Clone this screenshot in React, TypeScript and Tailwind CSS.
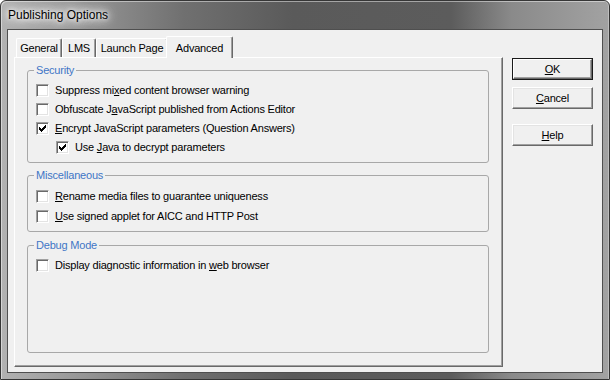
import React from "react";

const FONT = "font-['Liberation_Sans',Arial,sans-serif]";

function Check({ checked }: { checked?: boolean }) {
  return (
    <div className="relative w-[13px] h-[13px] shrink-0 bg-white border border-t-[#a0a0a0] border-l-[#a0a0a0] border-b-white border-r-white shadow-[inset_1px_1px_0_#696969,inset_-1px_-1px_0_#e3e3e3]">
      {checked && (
        <svg className="absolute left-[1px] top-[1px]" width="9" height="9" viewBox="0 0 9 9" shapeRendering="crispEdges">
          <g fill="#000">
            <rect x="7" y="1" width="1" height="1" />
            <rect x="6" y="2" width="2" height="1" />
            <rect x="1" y="3" width="1" height="1" />
            <rect x="5" y="3" width="3" height="1" />
            <rect x="1" y="4" width="2" height="1" />
            <rect x="4" y="4" width="3" height="1" />
            <rect x="1" y="5" width="5" height="1" />
            <rect x="2" y="6" width="3" height="1" />
            <rect x="3" y="7" width="1" height="1" />
          </g>
        </svg>
      )}
    </div>
  );
}

function Row({ checked, children, indent, tall }: { checked?: boolean; children: React.ReactNode; indent?: boolean; tall?: boolean }) {
  return (
    <div className={`flex items-center ${tall ? "h-[20px]" : "h-[19px]"} ${indent ? "pl-[20px]" : ""}`}>
      <Check checked={checked} />
      <span className="ml-[6px] whitespace-nowrap">{children}</span>
    </div>
  );
}

function U({ children }: { children: React.ReactNode }) {
  return <span className="underline underline-offset-[1px]">{children}</span>;
}

function Group({ label, children, className }: { label: string; children: React.ReactNode; className?: string }) {
  return (
    <fieldset className={`border border-[#a8a8a8] rounded-[3px] p-0 m-0 min-w-0 ${className ?? ""}`}>
      <legend className="ml-[6px] px-[2px] leading-[13px] text-[#3f76c6]">{label}</legend>
      {children}
    </fieldset>
  );
}

function Tab({ label, w }: { label: string; w: string }) {
  return (
    <div
      className={`${w} h-[19px] flex items-center justify-center bg-[#f0f0f0] border-t border-l border-r border-t-white border-l-white border-r-[#696969] rounded-t-[2px] shadow-[inset_-1px_0_0_#a0a0a0] pt-[1px]`}
    >
      {label}
    </div>
  );
}

function Btn({ children, def, className }: { children: React.ReactNode; def?: boolean; className?: string }) {
  if (def) {
    return (
      <div className={`w-[81px] h-[22px] border border-[#1a1a1a] ${className ?? ""}`}>
        <div className="w-full h-full flex items-center justify-center border border-t-white border-l-white border-b-[#696969] border-r-[#696969] shadow-[inset_-1px_-1px_0_#a0a0a0] bg-[#f0f0f0]">
          {children}
        </div>
      </div>
    );
  }
  return (
    <div
      className={`w-[81px] h-[22px] flex items-center justify-center border border-t-white border-l-white border-b-[#696969] border-r-[#696969] shadow-[inset_-1px_-1px_0_#a0a0a0,inset_1px_1px_0_#e3e3e3] bg-[#f0f0f0] ${className ?? ""}`}
    >
      {children}
    </div>
  );
}

export default function App() {
  return (
    <div className={`w-[610px] h-[380px] bg-white ${FONT}`}>
      <div className="w-[610px] h-[380px] flex flex-col rounded-t-[6px] border border-[#363636] bg-[linear-gradient(90deg,#b2b2b2_0%,#959595_14%,#707070_30%,#5a5a5a_48%,#5c5c5c_74%,#8a8a8a_84%,#a2a2a2_100%)] shadow-[inset_1px_1px_0_rgba(255,255,255,0.45),inset_-1px_0_0_rgba(255,255,255,0.3)]">
        {/* title */}
        <div className="h-[28px] pl-[7px] flex items-center">
          <span className="text-[12px] text-black leading-none pb-[1px] [text-shadow:0_0_4px_#fff,0_0_8px_#fff,0_0_12px_#fff,0_0_16px_#eee]">
            Publishing Options
          </span>
        </div>
        {/* client */}
        <div className="mx-[6px] h-[344px] border border-[#4f4f4f] bg-[#f0f0f0] text-[11px] text-black tracking-[-0.2px] flex pl-[6px] pt-[6px]">
          <div className="flex flex-col w-[489px]">
            <div className="h-[21px] flex items-end pl-[2px]">
              <Tab label="General" w="w-[46px]" />
              <Tab label="LMS" w="w-[34px]" />
              <Tab label="Launch Page" w="w-[72px]" />
              <div className="relative z-10 -mx-[2px] -mb-[1px] w-[67px] h-[22px] flex items-start justify-center pt-[3px] bg-[#f0f0f0] border-t border-l border-r border-t-white border-l-white border-r-[#696969] rounded-t-[2px] shadow-[inset_-1px_0_0_#a0a0a0]">
                Advanced
              </div>
            </div>
            <div className="h-[310px] flex flex-col border border-t-white border-l-white border-b-[#696969] border-r-[#696969] shadow-[inset_-1px_-1px_0_#a0a0a0] pl-[12px] pr-[13px] pt-[6px] pb-[13px]">
              <Group label="Security">
                <div className="pl-[8px] pt-[4px] pb-[5px]">
                  <Row>Suppress mi<U>x</U>ed content browser warning</Row>
                  <Row>Obfuscate J<U>a</U>vaScript published from Actions Editor</Row>
                  <Row checked><U>E</U>ncrypt JavaScript parameters (Question Answers)</Row>
                  <Row checked indent>Use <U>J</U>ava to decrypt parameters</Row>
                </div>
              </Group>
              <Group label="Miscellaneous" className="mt-[6px]">
                <div className="pl-[8px] pt-[4px] pb-[5px]">
                  <Row tall><U>R</U>ename media files to guarantee uniqueness</Row>
                  <Row tall><U>U</U>se signed applet for AICC and HTTP Post</Row>
                </div>
              </Group>
              <Group label="Debug Mode" className="mt-[7px] flex-1">
                <div className="pl-[8px] pt-[3px]">
                  <Row tall>Display diagnostic information in <U>w</U>eb browser</Row>
                </div>
              </Group>
            </div>
          </div>
          <div className="ml-[9px] mt-[22px] flex flex-col">
            <Btn def><U>O</U>K</Btn>
            <Btn className="mt-[7px]"><U>C</U>ancel</Btn>
            <Btn className="mt-[15px]"><U>H</U>elp</Btn>
          </div>
        </div>
      </div>
    </div>
  );
}
